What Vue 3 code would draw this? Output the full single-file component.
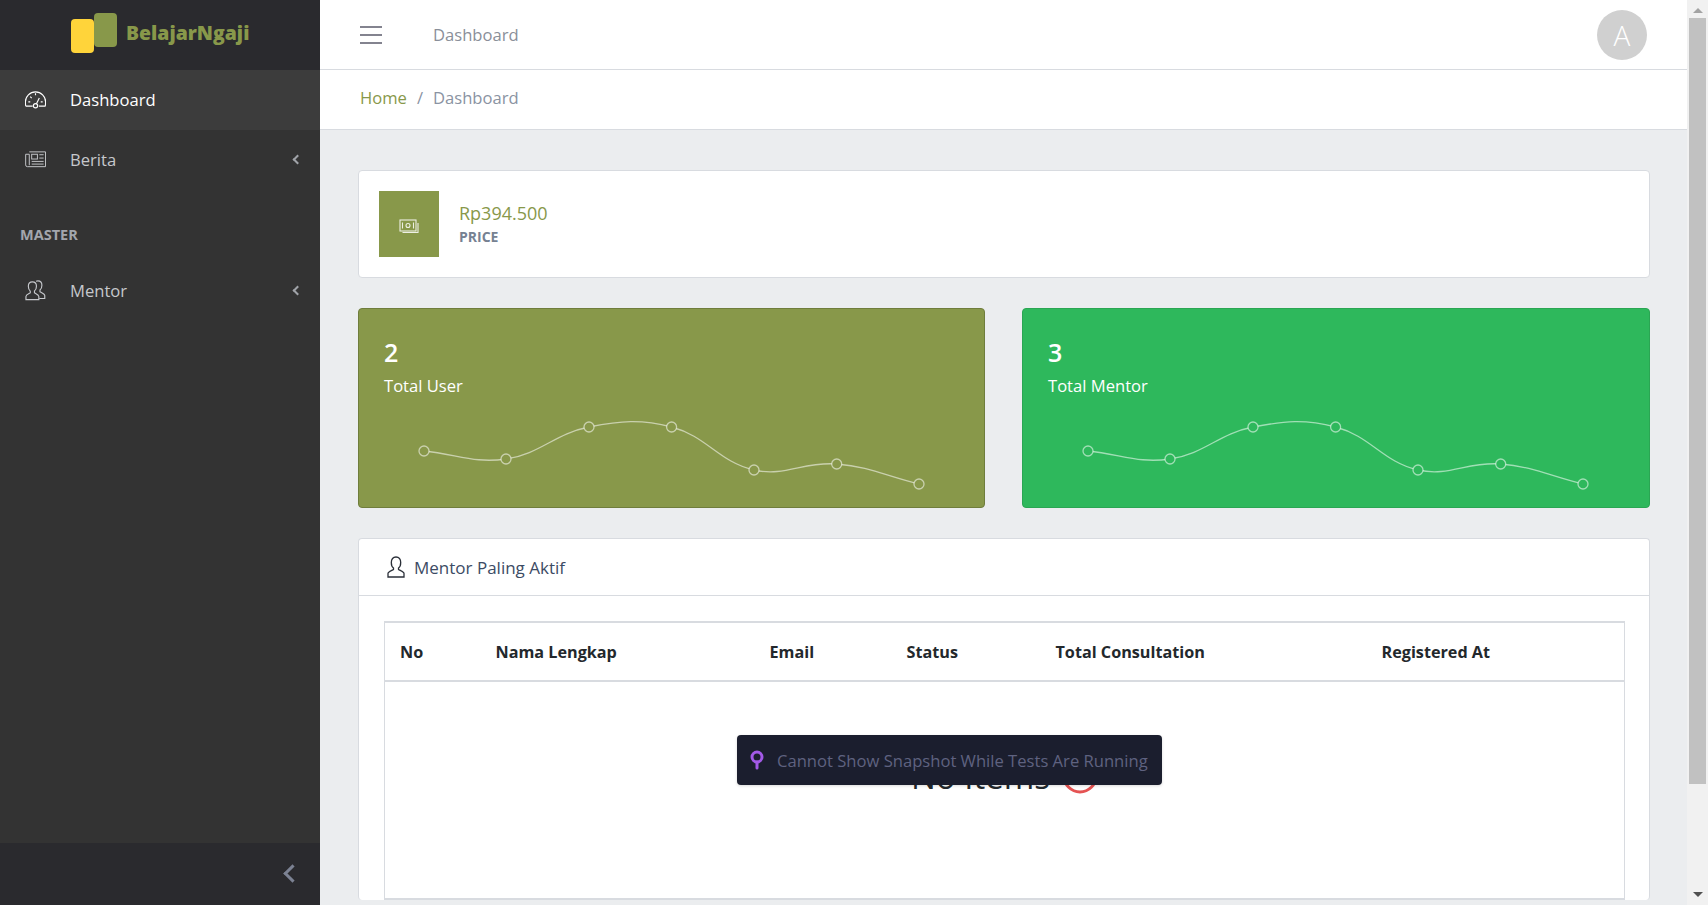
<script setup>
const menu = [
    { label: 'Dashboard', icon: 'speedometer', active: true },
    { label: 'Berita', icon: 'newspaper', caret: true },
]

const columns = [
    { label: 'No', width: 96 },
    { label: 'Nama Lengkap', width: 274 },
    { label: 'Email', width: 137 },
    { label: 'Status', width: 149 },
    { label: 'Total Consultation', width: 326 },
    { label: 'Registered At', width: 258 },
]

const stats = [
    { value: 2, label: 'Total User', color: 'olive' },
    { value: 3, label: 'Total Mentor', color: 'green' },
]

const points = [
    [66, 33], [148, 41], [231, 9], [313.6, 9], [396, 52], [478.7, 46], [561, 66],
]

// same spline chart.js draws with tension 0.4
function splinePath(pts, t = 0.4) {
    const ctrl = pts.map((cur, i) => {
        const prev = pts[i - 1] || cur
        const next = pts[i + 1] || cur
        const d01 = Math.hypot(cur[0] - prev[0], cur[1] - prev[1])
        const d12 = Math.hypot(next[0] - cur[0], next[1] - cur[1])
        const total = d01 + d12 || 1
        const fa = (t * d01) / total
        const fb = (t * d12) / total
        return {
            before: [cur[0] - fa * (next[0] - prev[0]), cur[1] - fa * (next[1] - prev[1])],
            after: [cur[0] + fb * (next[0] - prev[0]), cur[1] + fb * (next[1] - prev[1])],
        }
    })
    let d = `M${pts[0][0]} ${pts[0][1]}`
    for (let i = 1; i < pts.length; i++) {
        const a = ctrl[i - 1].after
        const b = ctrl[i].before
        d += ` C${a[0]} ${a[1]} ${b[0]} ${b[1]} ${pts[i][0]} ${pts[i][1]}`
    }
    return d
}

const linePath = splinePath(points)
</script>

<template>
    <div class="page">
        <aside class="sidebar">
            <div class="brand">
                <div class="logo">
                    <span class="logo-back"></span>
                    <span class="logo-front"></span>
                </div>
                <span class="brand-name">BelajarNgaji</span>
            </div>

            <nav class="nav">
                <a v-for="item in menu" :key="item.label" class="nav-item" :class="{ active: item.active }">
                    <svg v-if="item.icon === 'speedometer'" class="nav-icon" viewBox="0 0 22 18" fill="none" stroke="currentColor" stroke-width="1.2">
                        <path d="M1 16h7M14.5 16H21c.5-1 .6-2.500.6-4.500C21.600 5.800 16.800 1 11 1S.4 5.800.4 11.500c0 2 .1 3.500.6 4.500" />
                        <circle cx="11" cy="15.500" r="2.200" />
                        <path d="M12 13.500l3-6M11 2.500v2M3.500 11.500h2M16.500 11.500h2M5.500 6l1.500 1.500" />
                    </svg>
                    <svg v-else class="nav-icon" viewBox="0 0 22 18" fill="none" stroke="currentColor" stroke-width="1">
                        <path d="M4.500 1h17v15.500H2.500A1.800 1.800 0 0 1 .7 14.700V3.500h3.800v11.500" />
                        <rect x="7" y="3.500" width="6" height="5" />
                        <path d="M15 4h4.500M15 7.500h4.500M7 11h12.500M7 13.800h12.500" />
                    </svg>
                    <span>{{ item.label }}</span>
                    <span v-if="item.caret" class="caret"></span>
                </a>

                <div class="nav-title">MASTER</div>

                <a class="nav-item">
                    <svg class="nav-icon" viewBox="0 0 22 22" fill="none" stroke="currentColor" stroke-width="1.2">
                        <path d="M1 20.500v-3.200c0-1.700 3.500-3 4.500-3.800v-1.800C4 10.500 3.500 8.800 3.500 6.500c0-3 1.500-4.500 4.200-4.500s4.300 1.500 4.300 4.500c0 2.300-.6 4-2.100 5v1.900c1 .8 4.600 2.200 4.600 3.900v3.200z" />
                        <path d="M11.500 1.300c.6-.3 1.300-.4 2-.4 2.700 0 4.200 1.600 4.200 4.500 0 2.300-.5 4-2 5v1.900c1 .8 5 2.200 5 3.900v3.200h-5.800" />
                    </svg>
                    <span>Mentor</span>
                    <span class="caret"></span>
                </a>
            </nav>

            <div class="sidebar-footer">
                <span class="collapse-arrow"></span>
            </div>
        </aside>

        <main class="main">
            <header class="topbar">
                <div class="burger">
                    <i></i><i></i><i></i>
                </div>
                <span class="topbar-link">Dashboard</span>
                <div class="avatar">A</div>
            </header>

            <div class="breadcrumb">
                <span class="crumb-home">Home</span>
                <span class="crumb-sep">/</span>
                <span class="crumb-now">Dashboard</span>
            </div>

            <section class="content">
                <div class="card price-card">
                    <div class="price-icon">
                        <svg viewBox="0 0 20 16" width="20" height="16" fill="none" stroke="#fff" stroke-width="1.100" opacity="0.85">
                            <rect x="1" y="1" width="16" height="11" />
                            <circle cx="9" cy="6.500" r="2" />
                            <path d="M3.500 3.500v6M14.500 3.500v6M19 4v9.500H3.500" />
                        </svg>
                    </div>
                    <div>
                        <div class="price-value">Rp394.500</div>
                        <div class="price-label">PRICE</div>
                    </div>
                </div>

                <div class="stat-row">
                    <div v-for="stat in stats" :key="stat.label" class="stat-card" :class="stat.color">
                        <div class="stat-value">{{ stat.value }}</div>
                        <div class="stat-label">{{ stat.label }}</div>
                        <svg class="stat-chart" viewBox="0 0 627 90" fill="none">
                            <path :d="linePath" stroke="rgba(255,255,255,.55)" stroke-width="1.300" />
                            <circle
                                v-for="p in points"
                                :key="p[0]"
                                :cx="p[0]"
                                :cy="p[1]"
                                r="5"
                                class="stat-dot"
                                stroke="rgba(255,255,255,.55)"
                                stroke-width="1.300"
                            />
                        </svg>
                    </div>
                </div>

                <div class="card table-card">
                    <div class="table-head">
                        <svg viewBox="0 0 18 22" width="18" height="22" fill="none" stroke="#2a2f38" stroke-width="1.300">
                            <path d="M1 21v-3.500c0-1.700 4-3 5.500-4V12C5 11 4.300 8.500 4.300 6.500c0-3.300 1.700-5.500 4.700-5.500s4.700 2.200 4.700 5.500c0 2-.7 4.500-2.200 5.500v1.500c1.500 1 5.500 2.300 5.500 4V21z" />
                        </svg>
                        <span>Mentor Paling Aktif</span>
                    </div>
                    <div class="table-body">
                        <table class="mentor-table">
                            <thead>
                                <tr>
                                    <th v-for="col in columns" :key="col.label" :style="{ width: col.width + 'px' }">{{ col.label }}</th>
                                </tr>
                            </thead>
                            <tbody>
                                <tr>
                                    <td :colspan="columns.length">
                                        <div class="empty">
                                            <span>No Items</span>
                                            <svg viewBox="0 0 36 36" width="36" height="36" fill="none" stroke="#e55353" stroke-width="3">
                                                <circle cx="18" cy="18" r="16" />
                                            </svg>
                                        </div>
                                    </td>
                                </tr>
                            </tbody>
                        </table>
                    </div>
                </div>
            </section>
        </main>

        <div class="scrollbar">
            <span class="arrow-up"></span>
            <div class="thumb-track"><div class="thumb"></div></div>
            <span class="arrow-down"></span>
        </div>

        <div class="snapshot-toast">
            <svg viewBox="0 0 14 20" width="14" height="20" fill="none">
                <circle cx="7" cy="7" r="5" stroke="#a259e6" stroke-width="3" />
                <path d="M7 12v6" stroke="#a259e6" stroke-width="3" stroke-linecap="round" />
            </svg>
            <span>Cannot Show Snapshot While Tests Are Running</span>
        </div>
    </div>
</template>

<style>
html,
body {
    margin: 0;
    overflow: hidden;
}
</style>

<style scoped>
.page {
    position: relative;
    display: flex;
    height: 905px;
    overflow: hidden;
    background: #ebedef;
    font-family: "Open Sans", "Noto Sans", sans-serif;
    font-size: 16.6px;
    color: #3c4b64;
}

.sidebar {
    width: 320px;
    flex: none;
    display: flex;
    flex-direction: column;
    background: #333333;
    color: #c6c8cc;
}

.brand {
    height: 70px;
    box-sizing: border-box;
    flex: none;
    display: flex;
    align-items: center;
    padding-left: 71px;
    padding-bottom: 4px;
    background: #2a2a2e;
}

.logo {
    position: relative;
    width: 46px;
    height: 40px;
    margin-right: 9px;
}

.logo-back {
    position: absolute;
    left: 23px;
    top: 0;
    width: 23px;
    height: 34px;
    border-radius: 4px;
    background: #88984a;
}

.logo-front {
    position: absolute;
    left: 0;
    top: 6px;
    width: 23px;
    height: 34px;
    border-radius: 4px;
    background: #ffd43a;
}

.brand-name {
    margin-top: -2px;
    font-size: 19.4px;
    font-weight: 800;
    color: #88984a;
}

.nav {
    flex: 1;
}

.nav-item {
    height: 60px;
    box-sizing: border-box;
    display: flex;
    align-items: center;
    padding-left: 25px;
    padding-right: 19px;
    padding-bottom: 2px;
}

.nav-item.active {
    background: #3c3c3c;
    color: #fff;
}

.nav-icon {
    width: 21px;
    height: 21px;
    margin-right: 24px;
    flex: none;
}

.caret {
    width: 5px;
    height: 5px;
    margin-left: auto;
    border-left: 2px solid #a0a3a8;
    border-bottom: 2px solid #a0a3a8;
    transform: rotate(45deg);
}

.nav-title {
    margin: 34px 0 15px;
    padding-left: 20px;
    font-size: 14.500px;
    line-height: 22px;
    font-weight: 700;
    color: #a3a6ad;
}

.sidebar-footer {
    height: 62px;
    box-sizing: border-box;
    flex: none;
    display: flex;
    align-items: center;
    justify-content: flex-end;
    padding-right: 21px;
    padding-bottom: 2px;
    background: #2a2a2e;
}

.collapse-arrow {
    width: 10px;
    height: 10px;
    border-left: 3px solid #7c8293;
    border-bottom: 3px solid #7c8293;
    transform: rotate(45deg);
}

.main {
    flex: 1;
    min-width: 0;
    display: flex;
    flex-direction: column;
}

.topbar {
    height: 69px;
    flex: none;
    display: flex;
    align-items: center;
    padding: 0 40px;
    background: #fff;
    border-bottom: 1px solid #d8dbe0;
}

.burger {
    width: 22px;
    display: flex;
    flex-direction: column;
    gap: 6px;
    margin-right: 51px;
}

.burger i {
    display: block;
    height: 2px;
    background: #83838f;
}

.topbar-link {
    color: #8a8f99;
}

.avatar {
    width: 50px;
    height: 50px;
    margin-left: auto;
    border-radius: 50%;
    background: #d0d0d0;
    color: #fff;
    font-size: 28px;
    font-weight: 300;
    line-height: 50px;
    text-align: center;
}

.breadcrumb {
    height: 59px;
    flex: none;
    display: flex;
    align-items: center;
    padding-left: 40px;
    background: #fff;
    border-bottom: 1px solid #d8dbe0;
}

.breadcrumb span {
    margin-top: -4px;
}

.crumb-home {
    color: #88984a;
}

.breadcrumb .crumb-sep {
    margin-left: 10px;
    margin-right: 10px;
    color: #8a93a2;
}

.crumb-now {
    color: #8a93a2;
}

.content {
    padding: 40px 37px 0 38px;
}

.card {
    background: #fff;
    border: 1px solid #d8dbe0;
    border-radius: 4px;
}

.price-card {
    height: 108px;
    box-sizing: border-box;
    display: flex;
    align-items: center;
    padding-left: 20px;
    margin-bottom: 30px;
}

.price-icon {
    width: 60px;
    height: 66px;
    box-sizing: border-box;
    margin-right: 20px;
    padding-top: 5px;
    display: flex;
    align-items: center;
    justify-content: center;
    background: #88984a;
}

.price-value {
    font-size: 18px;
    line-height: 24px;
    color: #88984a;
}

.price-label {
    margin-top: 2px;
    font-size: 14px;
    line-height: 20px;
    font-weight: 700;
    color: #768192;
}

.stat-row {
    display: grid;
    grid-template-columns: 627px 1fr;
    gap: 37px;
    margin-bottom: 30px;
}

.stat-card {
    height: 200px;
    box-sizing: border-box;
    display: flex;
    flex-direction: column;
    padding-top: 29px;
    border-radius: 4px;
    color: #fff;
}

.stat-card.olive {
    --card-bg: #88984a;
    background: #88984a;
    border: 1px solid #6f7d3c;
}

.stat-card.green {
    --card-bg: #2eb85c;
    background: #2eb85c;
    border: 1px solid #2aa653;
}

.stat-value {
    padding-left: 25px;
    font-size: 25px;
    line-height: 28px;
    font-weight: 600;
}

.stat-label {
    padding-left: 25px;
    margin-top: 8px;
    line-height: 24px;
}

.stat-chart {
    display: block;
    width: 627px;
    height: 90px;
    margin-top: auto;
    margin-left: -1px;
    margin-bottom: -1px;
}

.stat-dot {
    fill: var(--card-bg);
}

.table-card {
    border-bottom: none;
}

.table-head {
    height: 56px;
    display: flex;
    align-items: center;
    gap: 9px;
    padding-left: 28px;
    border-bottom: 1px solid #d8dbe0;
    font-size: 17px;
}

.table-body {
    padding: 25px 25px 0;
}

.mentor-table {
    width: 100%;
    table-layout: fixed;
    border-collapse: collapse;
    border: 1px solid #d8dbe0;
    border-top-width: 2px;
    border-bottom-width: 2px;
}

.mentor-table th {
    height: 59px;
    box-sizing: border-box;
    padding: 0 0 0 15px;
    text-align: left;
    font-size: 16.200px;
    font-weight: 700;
    color: #23282c;
    border-bottom: 2px solid #d8dbe0;
}

.mentor-table td {
    padding: 0;
}

.empty {
    height: 216px;
    display: flex;
    align-items: center;
    justify-content: center;
    gap: 12px;
    padding-bottom: 28px;
    box-sizing: border-box;
    font-size: 33px;
    color: #23282c;
}

.scrollbar {
    width: 21px;
    flex: none;
    display: flex;
    flex-direction: column;
    align-items: center;
    background: #f1f1f1;
}

.arrow-up {
    width: 0;
    height: 0;
    margin: 8px 0 5px;
    border-left: 5px solid transparent;
    border-right: 5px solid transparent;
    border-bottom: 5px solid #a3a3a3;
}

.thumb-track {
    flex: 1;
    width: 17px;
}

.thumb {
    height: 766px;
    background: #c1c1c1;
}

.arrow-down {
    width: 0;
    height: 0;
    margin: 5px 0 8px;
    border-left: 5px solid transparent;
    border-right: 5px solid transparent;
    border-top: 5px solid #505050;
}

.snapshot-toast {
    position: absolute;
    left: 737px;
    top: 735px;
    width: 425px;
    height: 50px;
    box-sizing: border-box;
    display: flex;
    align-items: center;
    gap: 13px;
    padding-left: 13px;
    border-radius: 4px;
    background: #1b1e2e;
    box-shadow: 0 1px 3px rgba(0, 0, 0, 0.15);
    font-size: 16.600px;
    color: #5f6280;
}
</style>
